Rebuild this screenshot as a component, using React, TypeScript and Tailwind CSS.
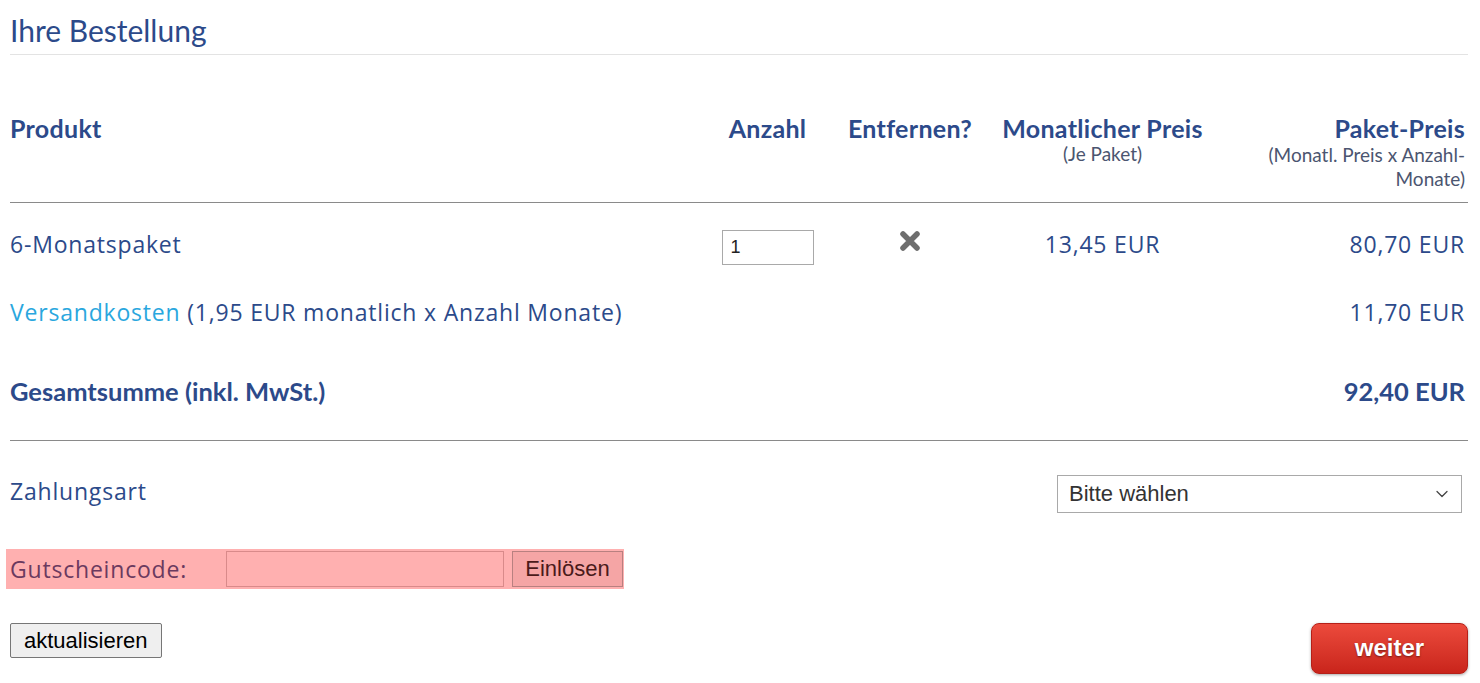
import React from 'react';
import { ChevronDown } from 'lucide-react';

const blue = 'text-[#2c4a8a]';

const App: React.FC = () => {
    const gridCols = 'grid grid-cols-[1fr_125px_160px_225px_253px]';

    return (
        <div className="w-[1480px] h-[683px] bg-white px-[10px] pr-[12px] font-['Open_Sans',sans-serif] overflow-hidden">
            <h1 className={`pt-[12px] pb-[6px] text-[30px] leading-[36px] font-['Lato',sans-serif] ${blue} border-b border-[#e3e3e3]`}>Ihre Bestellung</h1>

            {/* header */}
            <div className={`${gridCols} items-start pt-[58px] h-[148px] border-b border-[#8a8a8a] font-['Lato',sans-serif] font-bold ${blue}`}>
                <div className="text-[25px] leading-[30px] tracking-[0.3px]">Produkt</div>
                <div className="text-[25px] leading-[30px] tracking-[0.3px] text-center">Anzahl</div>
                <div className="text-[25px] leading-[30px] tracking-[0.3px] text-center">Entfernen?</div>
                <div className="text-center">
                    <div className="text-[25px] leading-[30px] tracking-[0.3px]">Monatlicher Preis</div>
                    <div className="text-[19px] leading-[22px] font-normal text-[#4b5570]">(Je Paket)</div>
                </div>
                <div className="text-right pr-[3px]">
                    <div className="text-[25px] leading-[30px] tracking-[0.3px]">Paket-Preis</div>
                    <div className="text-[19px] leading-[24px] font-normal text-[#4b5570]">(Monatl. Preis x Anzahl-<br />Monate)</div>
                </div>
            </div>

            {/* rows */}
            <div className={`${gridCols} items-center pt-[21px] text-[23px] tracking-[0.8px] ${blue}`}>
                <div>6-Monatspaket</div>
                <div className="flex justify-center pt-[6px]">
                    <input defaultValue="1" className="w-[92px] h-[35px] border border-[#a9a9a9] px-[8px] text-[18px] tracking-normal text-[#222] font-['Liberation_Sans',sans-serif] outline-none" />
                </div>
                <div className="flex justify-center -mt-[8px]">
                    <svg width="22" height="22" viewBox="0 0 22 22">
                        <path d="M4 4 L18 18 M18 4 L4 18" stroke="#6e6e6e" strokeWidth="5.5" strokeLinecap="round" />
                    </svg>
                </div>
                <div className="text-center">13,45 EUR</div>
                <div className="text-right pr-[3px]">80,70 EUR</div>
            </div>

            <div className={`flex justify-between items-center pt-[30px] text-[23px] tracking-[0.8px] ${blue}`}>
                <div><span className="text-[#2aa7de]">Versandkosten</span> (1,95 EUR monatlich x Anzahl Monate)</div>
                <div className="pr-[3px]">11,70 EUR</div>
            </div>

            <div className={`flex justify-between items-center pt-[42px] pb-[30px] text-[25.5px] font-['Lato',sans-serif] font-bold border-b border-[#8a8a8a] ${blue}`}>
                <div>Gesamtsumme (inkl. MwSt.)</div>
                <div className="pr-[3px]">92,40 EUR</div>
            </div>

            {/* payment */}
            <div className="flex justify-between items-center pt-[34px]">
                <div className={`text-[23px] tracking-[0.8px] -mt-[6px] ${blue}`}>Zahlungsart</div>
                <div className="relative mr-[6px]">
                    <select className="appearance-none w-[405px] h-[38px] border border-[#a9a9a9] bg-white pl-[11px] text-[22px] text-[#333] font-['Liberation_Sans',sans-serif] outline-none">
                        <option>Bitte wählen</option>
                    </select>
                    <ChevronDown size={20} strokeWidth={1.5} className="absolute right-[10px] top-[9px] text-[#444] pointer-events-none" />
                </div>
            </div>

            <div className="pt-[36px]">
                <div className="-ml-[4px] w-[618px] h-[40px] bg-[#ffb0b0] flex items-center">
                    <div className="w-[220px] pl-[4px] text-[23px] tracking-[0.8px] text-[#6b3a5f]">Gutscheincode:</div>
                    <input className="w-[278px] h-[36px] bg-[#ffb0b0] border border-[#d98a8a] outline-none" />
                    <button className="ml-[8px] h-[36px] w-[111px] bg-[#f5a5a5] border border-[#b88080] text-[22px] text-[#4a1a1a] font-['Liberation_Sans',sans-serif]">Einlösen</button>
                </div>
            </div>

            <div className="flex justify-between items-start pt-[34px]">
                <button className="h-[35px] px-[13px] bg-[#efefef] border border-[#767676] rounded-[2px] text-[22px] text-black font-['Liberation_Sans',sans-serif]">aktualisieren</button>
                <button className="w-[157px] h-[51px] rounded-[8px] bg-gradient-to-b from-[#ec4a3c] to-[#c9241b] border border-[#b52018] shadow-[0_1px_3px_rgba(0,0,0,0.35)] text-white text-[24px] font-bold font-['Liberation_Sans',sans-serif] [text-shadow:0_1px_2px_rgba(0,0,0,0.45)]">weiter</button>
            </div>
        </div>
    );
};

export default App;
